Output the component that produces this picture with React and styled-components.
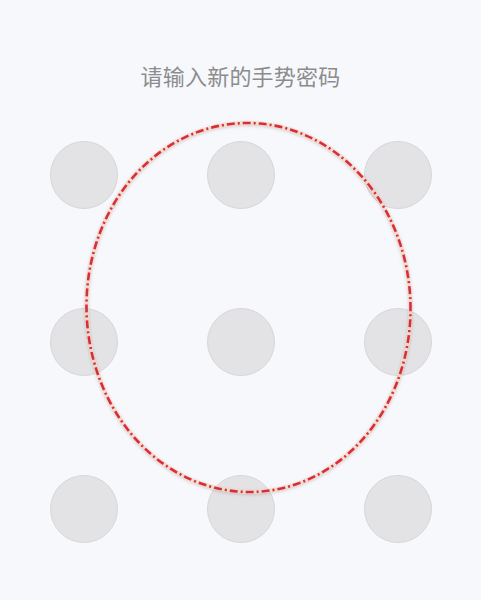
import styled, { createGlobalStyle } from "styled-components";

const GlobalStyle = createGlobalStyle`
  html, body {
    margin: 0;
    padding: 0;
    background: #f7f8fc;
  }
  body {
    font-family: "Noto Sans CJK SC", "Noto Sans", sans-serif;
  }
`;

const Page = styled.div`
  position: relative;
  width: 481px;
  height: 600px;
  overflow: hidden;
  background: #f7f8fc;
`;

const Title = styled.h1`
  margin: 0;
  padding-top: 60px;
  height: 30px;
  line-height: 30px;
  text-align: center;
  font-size: 22px;
  font-weight: 400;
  color: #8c8c8e;
  letter-spacing: 0.2px;
`;

const Grid = styled.div`
  display: grid;
  grid-template-columns: repeat(3, 68px);
  grid-auto-rows: 68px;
  column-gap: 89px;
  row-gap: 99px;
  margin: 51px 0 0 50px;
`;

const Dot = styled.div`
  width: 68px;
  height: 68px;
  box-sizing: border-box;
  border-radius: 50%;
  background: #e3e3e5;
  border: 1px solid #d7d7da;
`;

const Trail = styled.svg`
  position: absolute;
  left: 0;
  top: 0;
  pointer-events: none;
  filter: drop-shadow(0 1px 1.5px rgba(120, 60, 40, 0.25));
`;

const App = () => {
  return (
    <Page>
      <GlobalStyle />
      <Title>请输入新的手势密码</Title>
      <Grid>
        {Array.from({ length: 9 }).map((_, i) => (
          <Dot key={i} />
        ))}
      </Grid>
      <Trail width="481" height="600" viewBox="0 0 481 600">
        <ellipse
          cx="248.5"
          cy="307.5"
          rx="162"
          ry="184.5"
          transform="rotate(-1.5 248.5 307.5)"
          fill="none"
          stroke="#f6dccd"
          strokeWidth="4"
          opacity="0.8"
        />
        <ellipse
          cx="248.5"
          cy="307.5"
          rx="162"
          ry="184.5"
          transform="rotate(-1.5 248.5 307.5)"
          fill="none"
          stroke="#d92e3a"
          strokeWidth="2.6"
          strokeDasharray="8 3 2 3"
        />
      </Trail>
    </Page>
  );
};

export default App;
